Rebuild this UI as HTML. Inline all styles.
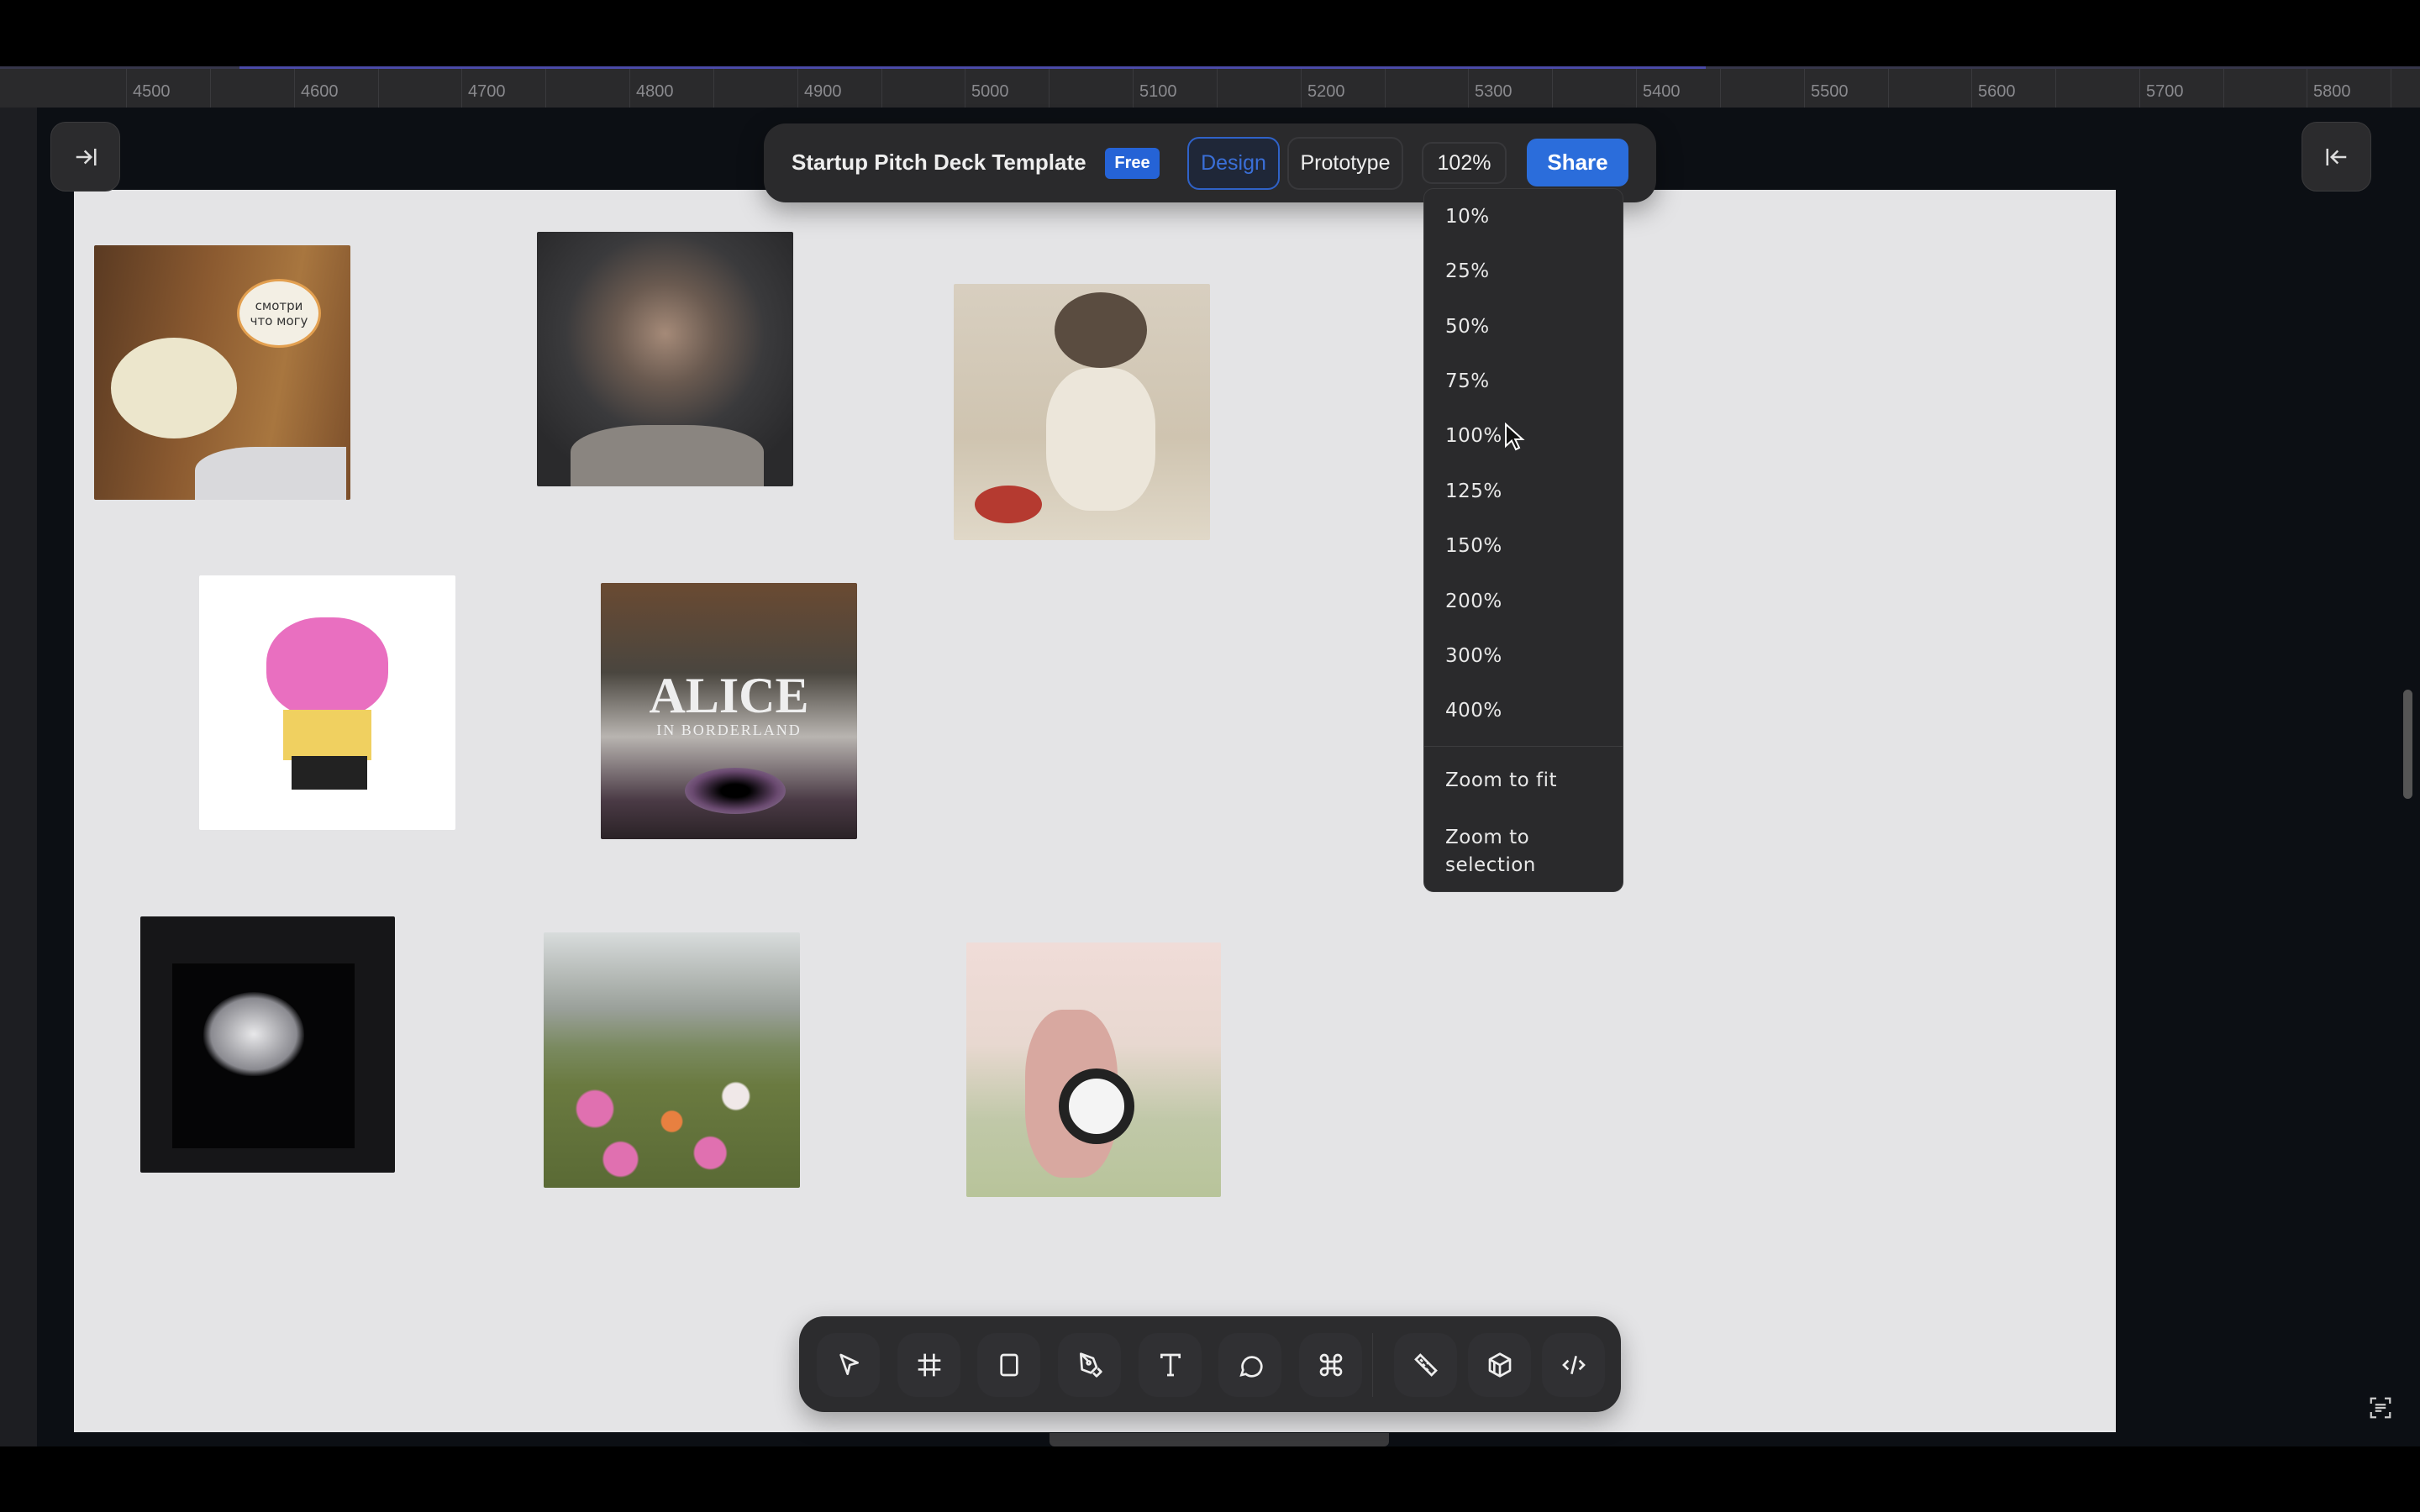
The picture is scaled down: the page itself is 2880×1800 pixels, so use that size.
<!DOCTYPE html>
<html><head><meta charset="utf-8"><style>
*{margin:0;padding:0;box-sizing:border-box}
body{width:2880px;height:1800px;background:#000;position:relative;overflow:hidden;font-family:"Liberation Sans",sans-serif}
.abs{position:absolute}
.ruler{left:0;top:79px;width:2880px;height:49px;background:#2a2a2c;border-top:3px solid #36364a}
.rl{position:absolute;top:16px;font-size:20px;color:#8a8a8e}
.tk{position:absolute;top:0;width:1px;height:46px;background:#3a3a3d}
.lr{left:0;top:128px;width:44px;height:1594px;background:#1d1e22}
.canvas{left:44px;top:128px;width:2836px;height:1594px;background:#0c0f14}
.board{left:88px;top:226px;width:2430px;height:1479px;background:#e4e4e6}
.img{position:absolute;border-radius:2px;overflow:hidden}
.bar{left:909px;top:147px;width:1062px;height:94px;background:#2a2a2c;border-radius:26px;box-shadow:0 10px 30px rgba(0,0,0,.35)}
.dd{left:1694px;top:224px;width:238px;height:838px;background:#2a2a2c;border-radius:12px;border:1px solid #3a3a3c}
.di{position:absolute;left:25px;font-family:"DejaVu Sans",sans-serif;font-size:23px;color:#e8e8e8;letter-spacing:0.5px}
.tb{left:951px;top:1567px;width:978px;height:114px;background:#2c2c2e;border-radius:30px;box-shadow:0 12px 30px rgba(0,0,0,.3)}
.tbb{position:absolute;top:20px;width:75px;height:76px;background:#303033;border-radius:22px;display:flex;align-items:center;justify-content:center}
</style></head><body>
<div class="abs ruler">
<div class="tk" style="left:150px"></div><div class="rl" style="left:158px">4500</div>
<div class="tk" style="left:250px"></div>
<div class="tk" style="left:350px"></div><div class="rl" style="left:358px">4600</div>
<div class="tk" style="left:450px"></div>
<div class="tk" style="left:549px"></div><div class="rl" style="left:557px">4700</div>
<div class="tk" style="left:649px"></div>
<div class="tk" style="left:749px"></div><div class="rl" style="left:757px">4800</div>
<div class="tk" style="left:849px"></div>
<div class="tk" style="left:949px"></div><div class="rl" style="left:957px">4900</div>
<div class="tk" style="left:1049px"></div>
<div class="tk" style="left:1148px"></div><div class="rl" style="left:1156px">5000</div>
<div class="tk" style="left:1248px"></div>
<div class="tk" style="left:1348px"></div><div class="rl" style="left:1356px">5100</div>
<div class="tk" style="left:1448px"></div>
<div class="tk" style="left:1548px"></div><div class="rl" style="left:1556px">5200</div>
<div class="tk" style="left:1648px"></div>
<div class="tk" style="left:1747px"></div><div class="rl" style="left:1755px">5300</div>
<div class="tk" style="left:1847px"></div>
<div class="tk" style="left:1947px"></div><div class="rl" style="left:1955px">5400</div>
<div class="tk" style="left:2047px"></div>
<div class="tk" style="left:2147px"></div><div class="rl" style="left:2155px">5500</div>
<div class="tk" style="left:2247px"></div>
<div class="tk" style="left:2346px"></div><div class="rl" style="left:2354px">5600</div>
<div class="tk" style="left:2446px"></div>
<div class="tk" style="left:2546px"></div><div class="rl" style="left:2554px">5700</div>
<div class="tk" style="left:2646px"></div>
<div class="tk" style="left:2745px"></div><div class="rl" style="left:2753px">5800</div>
<div class="tk" style="left:2845px"></div>
</div>
<div class="abs" style="left:285px;top:79px;width:1745px;height:3px;background:#4a4aa8"></div>
<div class="abs canvas"></div>
<div class="abs lr"></div>
<div class="abs board"></div>
<div class="abs" style="left:1249px;top:1706px;width:404px;height:16px;background:#3a3a3c;border-radius:0 0 6px 6px"></div>
<div class="abs" style="left:2860px;top:821px;width:11px;height:130px;background:#555;border-radius:6px"></div>

<!-- images -->
<div class="img" style="left:112px;top:292px;width:305px;height:303px;background:linear-gradient(100deg,#5a3a22 0%,#8b5a30 40%,#a8763f 70%,#7b4e2a 100%)">
 <div class="abs" style="left:170px;top:40px;width:100px;height:82px;border-radius:50%;background:#f3efe4;border:3px solid #e3a050;font-size:15px;color:#333;text-align:center;padding-top:20px;font-family:'DejaVu Sans',sans-serif">смотри<br>что могу</div>
 <div class="abs" style="left:20px;top:110px;width:150px;height:120px;border-radius:50%;background:#ece6cc"></div>
 <div class="abs" style="left:120px;top:240px;width:180px;height:70px;background:#d9d9dc;border-radius:40% 0 0 0"></div>
</div>
<div class="img" style="left:639px;top:276px;width:305px;height:303px;background:radial-gradient(circle at 50% 40%,#a58a78 0%,#6a5a50 25%,#3a3a3c 50%,#2a2a2c 80%)">
 <div class="abs" style="left:40px;top:230px;width:230px;height:80px;background:#8a8580;border-radius:40% 40% 0 0"></div>
</div>
<div class="img" style="left:1135px;top:338px;width:305px;height:305px;background:linear-gradient(180deg,#d8cfc0,#cfc4b0 60%,#e0d8c8)">
 <div class="abs" style="left:120px;top:10px;width:110px;height:90px;border-radius:50%;background:#5a4c40"></div>
 <div class="abs" style="left:110px;top:100px;width:130px;height:170px;border-radius:40%;background:#ece6da"></div>
 <div class="abs" style="left:25px;top:240px;width:80px;height:45px;border-radius:50%;background:#b53a30"></div>
</div>
<div class="img" style="left:237px;top:685px;width:305px;height:303px;background:#fff">
 <div class="abs" style="left:80px;top:50px;width:145px;height:120px;border-radius:45%;background:#e96fc0"></div>
 <div class="abs" style="left:100px;top:160px;width:105px;height:60px;background:#f0d060"></div>
 <div class="abs" style="left:110px;top:215px;width:90px;height:40px;background:#222"></div>
</div>
<div class="img" style="left:715px;top:694px;width:305px;height:305px;background:linear-gradient(180deg,#6a4a32 0%,#4a463f 35%,#b8b4b0 60%,#4a3a45 85%,#2a2226 100%)">
 <div class="abs" style="left:0;top:100px;width:305px;text-align:center;color:#eee;font-family:'Liberation Serif',serif;font-size:60px;font-weight:bold">ALICE</div>
 <div class="abs" style="left:0;top:165px;width:305px;text-align:center;color:#eee;font-family:'Liberation Serif',serif;font-size:18px;letter-spacing:2px">IN BORDERLAND</div>
 <div class="abs" style="left:100px;top:220px;width:120px;height:55px;border-radius:50%;background:radial-gradient(#000 20%,#6a4a70 60%,#9a8aa0)"></div>
</div>
<div class="img" style="left:167px;top:1091px;width:303px;height:305px;background:#161618">
 <div class="abs" style="left:38px;top:56px;width:217px;height:220px;background:#050506"></div>
 <div class="abs" style="left:75px;top:90px;width:120px;height:100px;border-radius:50% 50% 40% 40%;background:radial-gradient(#e8e8ea,#8a8a90 60%,transparent 72%)"></div>
</div>
<div class="img" style="left:647px;top:1110px;width:305px;height:304px;background:linear-gradient(180deg,#d8dcdc 0%,#9aa09a 30%,#7a8a60 45%,#6a7a40 60%,#5a6a35 100%)">
 <div class="abs" style="left:0;top:150px;width:305px;height:150px;background:radial-gradient(circle at 20% 40%,#e070b0 0 8%,transparent 9%),radial-gradient(circle at 50% 50%,#e88040 0 7%,transparent 8%),radial-gradient(circle at 75% 30%,#f0e8e8 0 6%,transparent 7%),radial-gradient(circle at 65% 75%,#e070b0 0 8%,transparent 9%),radial-gradient(circle at 30% 80%,#e070b0 0 8%,transparent 9%)"></div>
</div>
<div class="img" style="left:1150px;top:1122px;width:303px;height:303px;background:linear-gradient(180deg,#f0dcd8 0%,#e8d8d0 40%,#c0c8a8 70%,#b8c49a 100%)">
 <div class="abs" style="left:70px;top:80px;width:110px;height:200px;border-radius:40%;background:#d8a8a0"></div>
 <div class="abs" style="left:110px;top:150px;width:90px;height:90px;border-radius:50%;background:#f4f4f4;border:12px solid #222"></div>
</div>

<!-- left/right buttons -->
<div class="abs" style="left:60px;top:145px;width:83px;height:83px;background:#2b2b2d;border:1px solid #3a3a3c;border-radius:18px;display:flex;align-items:center;justify-content:center">
<svg width="30" height="30" viewBox="0 0 24 24" fill="none" stroke="#ddd" stroke-width="2"><path d="M3 12h13M11 6l6 6-6 6M21 4v16"/></svg></div>
<div class="abs" style="left:2739px;top:145px;width:83px;height:83px;background:#2b2b2d;border:1px solid #3a3a3c;border-radius:18px;display:flex;align-items:center;justify-content:center">
<svg width="30" height="30" viewBox="0 0 24 24" fill="none" stroke="#ddd" stroke-width="2"><path d="M21 12H8M13 6l-6 6 6 6M3 4v16"/></svg></div>

<!-- top bar -->
<div class="abs bar">
 <div class="abs" style="left:33px;top:31px;font-size:26px;font-weight:bold;color:#eee">Startup Pitch Deck Template</div>
 <div class="abs" style="left:406px;top:29px;width:65px;height:37px;background:#2563d6;border-radius:6px;color:#fff;font-size:20px;font-weight:bold;text-align:center;line-height:37px">Free</div>
 <div class="abs" style="left:504px;top:16px;width:110px;height:63px;background:#1f2738;border:2px solid #2f62c8;border-radius:14px;color:#3a6fd8;font-size:25px;text-align:center;line-height:59px">Design</div>
 <div class="abs" style="left:623px;top:16px;width:138px;height:63px;border:2px solid #38383b;border-radius:14px;color:#eee;font-size:25px;text-align:center;line-height:59px">Prototype</div>
 <div class="abs" style="left:783px;top:22px;width:101px;height:50px;border:2px solid #38383b;border-radius:12px;color:#eee;font-size:25px;text-align:center;line-height:46px">102%</div>
 <div class="abs" style="left:908px;top:18px;width:121px;height:57px;background:#2b6ddb;border-radius:12px;color:#fff;font-size:26px;font-weight:bold;text-align:center;line-height:57px">Share</div>
</div>

<!-- dropdown -->
<div class="abs dd">
 <div class="di" style="top:20px">10%</div>
 <div class="di" style="top:85px">25%</div>
 <div class="di" style="top:151px">50%</div>
 <div class="di" style="top:216px">75%</div>
 <div class="di" style="top:281px">100%</div>
 <div class="di" style="top:347px">125%</div>
 <div class="di" style="top:412px">150%</div>
 <div class="di" style="top:478px">200%</div>
 <div class="di" style="top:543px">300%</div>
 <div class="di" style="top:608px">400%</div>
 <div class="abs" style="left:0;top:663px;width:236px;height:1px;background:#3c3c3f"></div>
 <div class="di" style="top:691px">Zoom to fit</div>
 <div class="di" style="top:756px;line-height:33px">Zoom to<br>selection</div>
</div>
<svg class="abs" style="left:1790px;top:503px" width="26" height="34" viewBox="0 0 13 17"><path d="M1 1v13l3.5-3.2 2.5 5.2 2-1-2.4-5H11z" fill="#111" stroke="#fff" stroke-width="1"/></svg>

<!-- bottom toolbar -->
<div class="abs tb">
 <div class="tbb" style="left:21px"><svg width="32" height="32" viewBox="0 0 24 24" fill="none" stroke="#eee" stroke-width="2" stroke-linejoin="round"><path d="M5 3l15 7-7 2-2 8z"/></svg></div>
 <div class="tbb" style="left:117px"><svg width="32" height="32" viewBox="0 0 24 24" fill="none" stroke="#eee" stroke-width="2"><path d="M8 2v20M16 2v20M2 8h20M2 16h20"/></svg></div>
 <div class="tbb" style="left:212px"><svg width="32" height="32" viewBox="0 0 24 24" fill="none" stroke="#eee" stroke-width="2"><rect x="5" y="3" width="14" height="18" rx="2"/></svg></div>
 <div class="tbb" style="left:308px"><svg width="32" height="32" viewBox="0 0 24 24" fill="none" stroke="#eee" stroke-width="2" stroke-linejoin="round"><path d="M4 2l11 4 3 8-5 5-8-3zM4 2l6 6M15 19l3 3 4-4-3-3"/><circle cx="11" cy="10" r="1.5"/></svg></div>
 <div class="tbb" style="left:404px"><svg width="32" height="32" viewBox="0 0 24 24" fill="none" stroke="#eee" stroke-width="2"><path d="M4 6V3h16v3M12 3v18M9 21h6"/></svg></div>
 <div class="tbb" style="left:499px"><svg width="32" height="32" viewBox="0 0 24 24" fill="none" stroke="#eee" stroke-width="2"><path d="M4 21l1.5-4.5A8.5 8.5 0 1 1 8 20z"/></svg></div>
 <div class="tbb" style="left:595px"><svg width="32" height="32" viewBox="0 0 24 24" fill="none" stroke="#eee" stroke-width="2"><path d="M9 9V6a3 3 0 1 0-3 3h12a3 3 0 1 0-3-3v12a3 3 0 1 0 3-3H6a3 3 0 1 0 3 3z"/></svg></div>
 <div class="abs" style="left:682px;top:20px;width:1px;height:76px;background:#3a3a3c"></div>
 <div class="tbb" style="left:708px"><svg width="32" height="32" viewBox="0 0 24 24" fill="none" stroke="#eee" stroke-width="2"><path d="M3 7l4-4 14 14-4 4zM7 7l2 2M10 6l1 1M9 11l2 2M13 10l1 1M12 15l2 2"/></svg></div>
 <div class="tbb" style="left:796px"><svg width="32" height="32" viewBox="0 0 24 24" fill="none" stroke="#eee" stroke-width="2" stroke-linejoin="round"><path d="M12 2l9 5v10l-9 5-9-5V7zM3 7l9 5 9-5M12 12v10M7 9.5v10"/></svg></div>
 <div class="tbb" style="left:884px"><svg width="32" height="32" viewBox="0 0 24 24" fill="none" stroke="#eee" stroke-width="2"><path d="M7 8l-4 4 4 4M17 8l4 4-4 4M14 4l-4 16"/></svg></div>
</div>

<svg class="abs" style="left:2818px;top:1661px" width="30" height="30" viewBox="0 0 24 24" fill="none" stroke="#ccc" stroke-width="1.8"><path d="M3 8V3h5M16 3h5v5M21 16v5h-5M8 21H3v-5M7 9h10M7 12h10M7 15h6"/></svg>
</body></html>
